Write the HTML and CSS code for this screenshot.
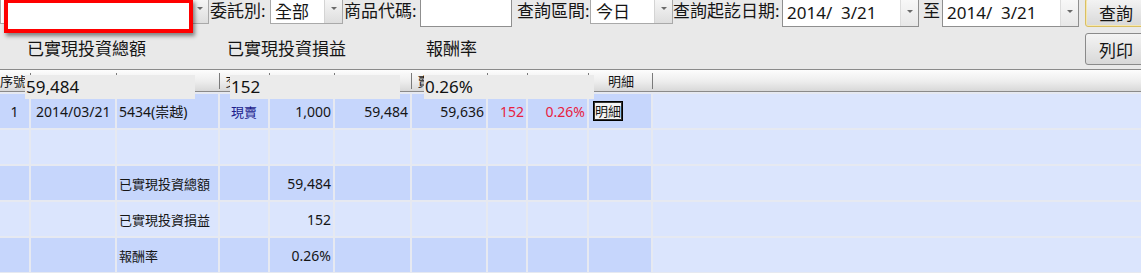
FILE: index.html
```html
<!DOCTYPE html>
<html lang="zh-Hant">
<head>
<meta charset="utf-8">
<title>已實現損益查詢</title>
<link rel="stylesheet" href="styles.css">
</head>
<body>
<div class="toolbar">
  <div class="bar">
    <div class="combo combo-acct"><span class="combo-value"></span><span class="combo-arrow"></span></div>
    <span class="lbl lbl-type">委託別:</span>
    <div class="combo combo-type"><span class="combo-value">全部</span><span class="combo-arrow"></span></div>
    <span class="lbl lbl-code">商品代碼:</span>
    <div class="textbox"></div>
    <span class="lbl lbl-range">查詢區間:</span>
    <div class="combo combo-range"><span class="combo-value">今日</span><span class="combo-arrow"></span></div>
    <span class="lbl lbl-date">查詢起訖日期:</span>
    <div class="datepick"><span class="date-value">2014/&nbsp;&nbsp;3/21</span><span class="combo-arrow date-arrow"></span></div>
    <span class="lbl lbl-to">至</span>
    <div class="datepick"><span class="date-value">2014/&nbsp;&nbsp;3/21</span><span class="combo-arrow date-arrow"></span></div>
    <button class="btn btn-query">查詢</button>
    <div class="redbox"></div>
  </div>
  <div class="summary">
    <span class="sum-label sum-total">已實現投資總額</span>
    <span class="sum-label sum-pl">已實現投資損益</span>
    <span class="sum-label sum-rate">報酬率</span>
    <button class="btn btn-print">列印</button>
  </div>
</div>

<div class="grid">
  <div class="grid-head">
    <div class="hcell h-seq">序號</div>
    <div class="hcell"></div>
    <div class="hcell"></div>
    <div class="hcell">交易別</div>
    <div class="hcell"></div>
    <div class="hcell"></div>
    <div class="hcell">賣出淨收入</div>
    <div class="hcell"></div>
    <div class="hcell"></div>
    <div class="hcell">明細</div>
    <div class="hcell h-fill"></div>
  </div>
  <div class="grid-body">
    <div class="row alt">
      <div class="cell c-center num">1</div>
      <div class="cell c-left num">2014/03/21</div>
      <div class="cell c-left num">5434(崇越)</div>
      <div class="cell c-center trade">現賣</div>
      <div class="cell c-right num">1,000</div>
      <div class="cell c-right num">59,484</div>
      <div class="cell c-right num">59,636</div>
      <div class="cell c-right num gain">152</div>
      <div class="cell c-right num gain">0.26%</div>
      <div class="cell c-btn"><span class="detail-btn">明細</span></div>
      <div class="cell fill"></div>
    </div>
    <div class="row">
      <div class="cell"></div><div class="cell"></div><div class="cell"></div><div class="cell"></div><div class="cell"></div>
      <div class="cell"></div><div class="cell"></div><div class="cell"></div><div class="cell"></div><div class="cell"></div>
      <div class="cell fill"></div>
    </div>
    <div class="row alt">
      <div class="cell"></div><div class="cell"></div>
      <div class="cell c-left">已實現投資總額</div>
      <div class="cell"></div>
      <div class="cell c-right num">59,484</div>
      <div class="cell"></div><div class="cell"></div><div class="cell"></div><div class="cell"></div><div class="cell"></div>
      <div class="cell fill"></div>
    </div>
    <div class="row">
      <div class="cell"></div><div class="cell"></div>
      <div class="cell c-left">已實現投資損益</div>
      <div class="cell"></div>
      <div class="cell c-right num">152</div>
      <div class="cell"></div><div class="cell"></div><div class="cell"></div><div class="cell"></div><div class="cell"></div>
      <div class="cell fill"></div>
    </div>
    <div class="row alt">
      <div class="cell"></div><div class="cell"></div>
      <div class="cell c-left">報酬率</div>
      <div class="cell"></div>
      <div class="cell c-right num">0.26%</div>
      <div class="cell"></div><div class="cell"></div><div class="cell"></div><div class="cell"></div><div class="cell"></div>
      <div class="cell fill"></div>
    </div>
  </div>

  <div class="overlay ov-total">59,484</div>
  <div class="overlay ov-pl">152</div>
  <div class="overlay ov-rate">0.26%</div>
</div>
</body>
</html>
```

FILE: styles.css
```css
html, body {
  margin: 0;
  padding: 0;
}

body {
  width: 1141px;
  height: 273px;
  overflow: hidden;
  background: #dbe5fd;
  color: #151515;
  font-family: "Noto Sans", "Noto Sans CJK TC", sans-serif;
}

/* ---------- toolbar ---------- */
.toolbar {
  position: relative;
  display: flex;
  flex-direction: column;
  height: 69px;
  background: #e9e9e9;
  font-size: 17px;
}

.bar {
  display: flex;
  align-items: flex-start;
  height: 29px;
  margin-top: -2px;
  position: relative;
}

.lbl {
  flex: none;
  line-height: 26px;
  white-space: nowrap;
  color: #151515;
}

.lbl-type  { width: 60px; padding-left: 1px; }
.lbl-code  { width: 76px; padding-left: 1px; }
.lbl-range { width: 73px; padding-left: 5px; }
.lbl-date  { width: 109px; }
.lbl-to    { width: 19px; padding-left: 4px; }

.combo,
.datepick,
.textbox {
  flex: none;
  display: flex;
  box-sizing: border-box;
  background: #fff;
  border: 1px solid #a9a9a9;
}

.combo { height: 26px; }
.datepick, .textbox { height: 29px; border-color: #8f8f8f; }

.combo-acct  { width: 209px; }
.combo-type  { width: 73px; }
.combo-range { width: 83px; }
.textbox     { width: 92px; }
.datepick    { width: 137px; }

.combo-value,
.date-value {
  flex: 1;
  padding-left: 4px;
  line-height: 25px;
  white-space: nowrap;
  overflow: hidden;
}

.combo-range .combo-value { padding-left: 5px; }

.date-value { line-height: 27px; }

.combo-arrow {
  flex: none;
  width: 17px;
  display: flex;
  align-items: center;
  justify-content: center;
  border-left: 1px solid #d4d4d4;
  background: linear-gradient(#f6f6f6, #dedede);
}

.combo-arrow::before {
  content: "";
  margin-top: -5px;
  border-left: 3px solid transparent;
  border-right: 3px solid transparent;
  border-top: 3px solid #6a6a6a;
}

.date-arrow {
  background: linear-gradient(#f8f8f8, #e8e8e8);
  border-left-color: #dcdcdc;
}

.date-arrow::before { margin-top: -2px; }

.btn {
  flex: none;
  box-sizing: border-box;
  padding: 0;
  font-family: inherit;
  font-size: 17px;
  color: #151515;
  border: 1px solid #8a8a8a;
  border-radius: 3px;
  background: linear-gradient(#f4f4f4, #e6e6e6 50%, #d8d8d8);
}

.btn-query {
  width: 62px;
  height: 29px;
  margin-left: 6px;
  border-color: #d9bf63;
  box-shadow: inset 0 0 0 1px #f6e7ae;
}

.redbox {
  position: absolute;
  left: 4px;
  top: 1px;
  width: 189px;
  height: 34px;
  box-sizing: border-box;
  border: 4px solid #ff0000;
  background: #fff;
  box-shadow: 2px 3px 4px rgba(0, 0, 0, 0.45);
}

.summary {
  display: flex;
  align-items: center;
  height: 32px;
  margin-top: 6px;
  padding-left: 27px;
}

.sum-label {
  flex: none;
  white-space: nowrap;
  line-height: 32px;
}

.sum-total { width: 200px; }
.sum-pl    { width: 199px; }

.btn-print {
  width: 62px;
  height: 32px;
  margin-left: auto;
  margin-right: -6px;
}

/* ---------- grid ---------- */
.grid {
  position: relative;
  --cols: 31px 86px 103px 50px 65px 77px 76px 40px 61px 64px 1fr;
}

.grid-head {
  display: grid;
  grid-template-columns: var(--cols);
  height: 23px;
  box-sizing: border-box;
  border-top: 1px solid #8a8a8a;
  border-bottom: 1px solid #8a8a8a;
  background: linear-gradient(#fdfdfd, #ededed 55%, #d8d8d8);
  font-size: 13px;
}

.hcell {
  position: relative;
  display: flex;
  align-items: center;
  justify-content: center;
  white-space: nowrap;
  overflow: hidden;
  color: #151515;
}

.hcell::after {
  content: "";
  position: absolute;
  right: 0;
  top: 3px;
  bottom: 2px;
  width: 1px;
  background: #7a7a7a;
}

.h-seq { justify-content: flex-start; }
.h-fill::after { display: none; }

.grid-body {
  border-top: 2px solid #e6e9f1;
}

.row {
  display: grid;
  grid-template-columns: var(--cols);
  height: 36px;
  box-sizing: border-box;
  border-bottom: 2px solid #e6e9f1;
  background: #dbe5fd;
  font-size: 13px;
}

.cell {
  display: flex;
  align-items: center;
  min-width: 0;
  border-right: 2px solid #e6e9f1;
  white-space: nowrap;
  overflow: hidden;
}

.row.alt .cell { background: #c6d6fc; }

.row .cell.fill,
.row.alt .cell.fill {
  border-right: 0;
  background: #dbe5fd;
}

.num { font-size: 14px; }

.c-center { justify-content: center; }
.c-left   { padding-left: 2px; }
.c-right  { justify-content: flex-end; padding-right: 2px; }

.row .c-left.num:nth-child(2) { padding-left: 5px; }

.trade { color: #1d1d8c; }
.gain  { color: #e8213f; }

.c-btn { padding-left: 4px; }

.detail-btn {
  display: flex;
  align-items: center;
  justify-content: center;
  width: 30px;
  height: 20px;
  box-sizing: border-box;
  border: 1px solid #000;
  box-shadow: inset 0 0 0 1px #333;
  background: #f3f3f3;
  font-size: 13px;
  margin-top: -1px;
}

.overlay {
  position: absolute;
  top: 6px;
  width: 170px;
  height: 24px;
  box-sizing: border-box;
  padding-left: 1px;
  background: #ebebeb;
  font-size: 17px;
  line-height: 24px;
  color: #111;
  white-space: nowrap;
}

.ov-total { left: 25px; }
.ov-pl    { left: 230px; }
.ov-rate  { left: 424px; }
```
